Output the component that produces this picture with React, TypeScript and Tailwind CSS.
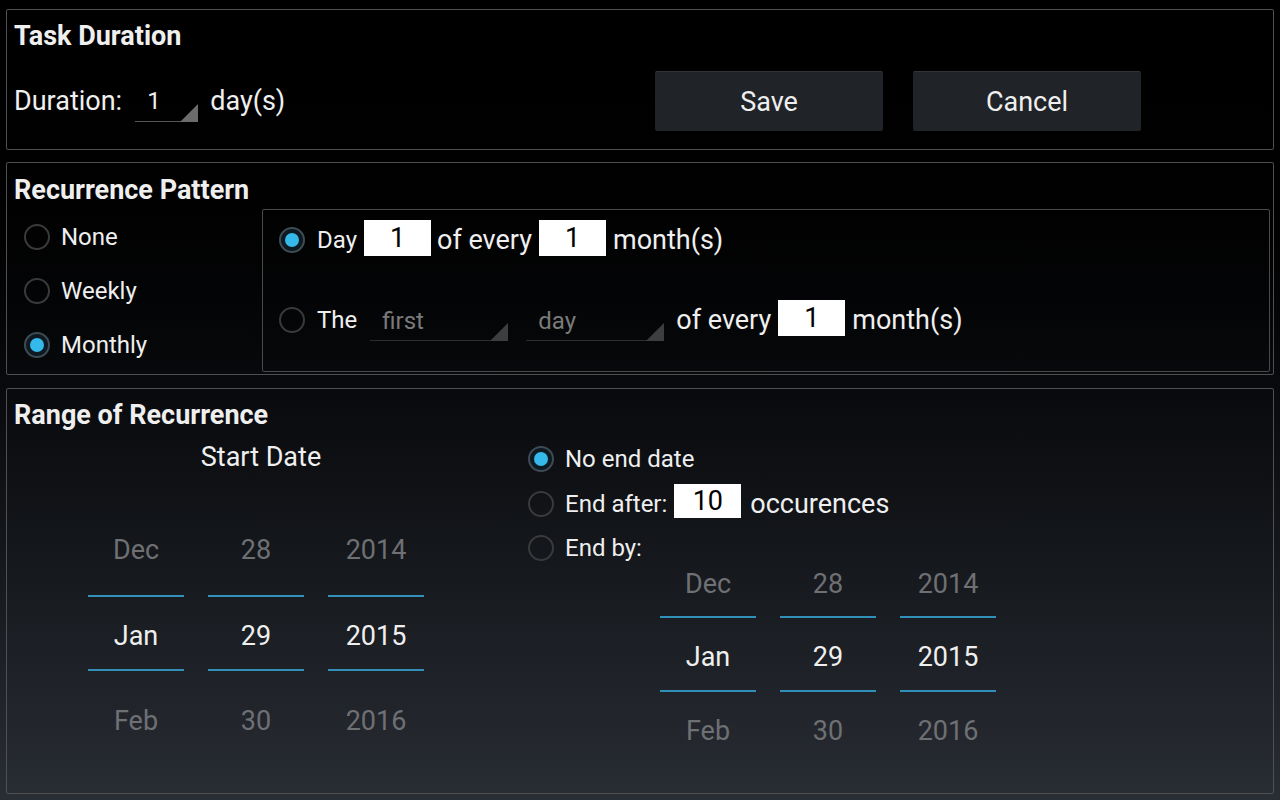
import React from 'react'

function Radio({ checked = false }: { checked?: boolean }) {
  if (checked) {
    return (
      <span className="flex h-[26px] w-[26px] shrink-0 items-center justify-center rounded-full border-2 border-[#3e4b54] bg-[#0d1a22]">
        <span className="h-[14px] w-[14px] rounded-full bg-[#35b8ea]" />
      </span>
    )
  }
  return <span className="h-[26px] w-[26px] shrink-0 rounded-full border-2 border-[#3a3a3a]" />
}

function Spinner({ value, className, muted = false }: { value: string; className: string; muted?: boolean }) {
  return (
    <div
      className={`relative flex h-[41px] items-center border-b pl-[12px] pt-[1px] text-[24px] leading-[28px] ${
        muted ? 'border-[#2e2e2e] text-[#7a7a7a]' : 'border-[#555555] text-[#efefef]'
      } ${className}`}
    >
      {value}
      <svg className="absolute -bottom-px right-0" width="18" height="18" viewBox="0 0 18 18">
        <path d="M18 0V18H0Z" fill={muted ? '#3e3e3e' : '#6c6c6c'} />
      </svg>
    </div>
  )
}

function Field({ value, className = '' }: { value: string; className?: string }) {
  return (
    <div className={`flex w-[67px] items-center justify-center bg-white text-[27px] text-black ${className}`}>
      {value}
    </div>
  )
}

const columns = [
  ['Dec', 'Jan', 'Feb'],
  ['28', '29', '30'],
  ['2014', '2015', '2016'],
]

function DatePicker({ top, bottom, className = '' }: { top: string; bottom: string; className?: string }) {
  return (
    <div className={`flex gap-[24px] ${className}`}>
      {columns.map(([prev, cur, next]) => (
        <div key={cur} className="flex w-[96px] flex-col">
          <div className={`flex w-full justify-center text-[#6e7073] ${top}`}>{prev}</div>
          <div className="h-[2px] w-full bg-[#3090b8]" />
          <div className="flex h-[72px] w-full items-center justify-center pt-[6px] text-[#efefef]">{cur}</div>
          <div className="h-[2px] w-full bg-[#3090b8]" />
          <div className={`flex w-full justify-center text-[#6e7073] ${bottom}`}>{next}</div>
        </div>
      ))}
    </div>
  )
}

export default function App() {
  return (
    <div className="flex h-[800px] w-[1280px] flex-col bg-gradient-to-b from-[#000000] to-[#292d34] px-[6px] pt-[9px] font-[Roboto,'Liberation_Sans',sans-serif] text-[27px] leading-[32px] text-[#efefef]">
      {/* Task duration */}
      <section className="flex h-[141px] flex-col rounded-[2px] border border-[#505050] pl-[7px] pt-[10px]">
        <h2 className="font-bold">Task Duration</h2>
        <div className="mt-[19px] flex h-[60px] items-center">
          <div className="flex w-[641px] items-center">
            <span>Duration:</span>
            <Spinner value="1" className="ml-[13px] w-[63px]" />
            <span className="ml-[12px]">day(s)</span>
          </div>
          <button className="flex h-[60px] w-[228px] items-center justify-center rounded-[2px] border-t border-[#303337] bg-[#202327]">
            Save
          </button>
          <button className="ml-[30px] flex h-[60px] w-[228px] items-center justify-center rounded-[2px] border-t border-[#303337] bg-[#202327]">
            Cancel
          </button>
        </div>
      </section>

      {/* Recurrence pattern */}
      <section className="mt-[12px] flex h-[213px] flex-col rounded-[2px] border border-[#505050] pt-[11px]">
        <h2 className="pl-[7px] font-bold">Recurrence Pattern</h2>
        <div className="mt-[3px] flex flex-1 pb-[3px] pr-[3px]">
          <div className="flex w-[255px] flex-col pl-[17px] pt-[1px] text-[24px] leading-[28px]">
            {['None', 'Weekly', 'Monthly'].map((label) => (
              <div key={label} className="flex h-[54px] items-center gap-[11px]">
                <Radio checked={label === 'Monthly'} />
                <span>{label}</span>
              </div>
            ))}
          </div>
          <div className="flex flex-1 flex-col rounded-[2px] border border-[#4a4a4a] pl-[16px] pt-[10px]">
            <div className="flex h-[40px] items-center">
              <Radio checked />
              <span className="ml-[12px] text-[24px] leading-[28px]">Day</span>
              <Field value="1" className="ml-[7px] h-[36px] self-start" />
              <span className="ml-[6px]">of every</span>
              <Field value="1" className="ml-[7px] h-[36px] self-start" />
              <span className="ml-[7px]">month(s)</span>
            </div>
            <div className="mt-[40px] flex h-[40px] items-center">
              <Radio />
              <span className="ml-[12px] text-[24px] leading-[28px]">The</span>
              <Spinner value="first" muted className="ml-[13px] w-[138px] self-start" />
              <Spinner value="day" muted className="ml-[18px] w-[138px] self-start" />
              <span className="ml-[12px]">of every</span>
              <Field value="1" className="ml-[7px] h-[36px] self-start" />
              <span className="ml-[7px]">month(s)</span>
            </div>
          </div>
        </div>
      </section>

      {/* Range of recurrence */}
      <section className="mt-[13px] flex h-[406px] flex-col rounded-[2px] border border-[#505050] pt-[10px]">
        <h2 className="pl-[7px] font-bold">Range of Recurrence</h2>
        <div className="flex flex-1">
          <div className="flex w-[508px] flex-col">
            <div className="mt-[10px] text-center">Start Date</div>
            <DatePicker
              top="h-[94px] items-center pt-[4px]"
              bottom="h-[98px] items-center pt-[2px]"
              className="ml-[81px] mt-[28px]"
            />
          </div>
          <div className="flex flex-col pl-[13px]">
            <div className="mt-[10px] flex h-[36px] items-center gap-[11px] text-[24px] leading-[28px]">
              <Radio checked />
              <span>No end date</span>
            </div>
            <div className="mt-[9px] flex h-[36px] items-center">
              <Radio />
              <span className="ml-[11px] text-[24px] leading-[28px]">End after:</span>
              <Field value="10" className="mb-[6px] ml-[7px] h-[34px]" />
              <span className="ml-[9px]">occurences</span>
            </div>
            <div className="mt-[8px] flex h-[36px] items-center gap-[11px] text-[24px] leading-[28px]">
              <Radio />
              <span>End by:</span>
            </div>
            <DatePicker
              top="h-[50px] items-start pt-[2px]"
              bottom="h-[74px] items-center pt-[3px]"
              className="ml-[132px]"
            />
          </div>
        </div>
      </section>
    </div>
  )
}
